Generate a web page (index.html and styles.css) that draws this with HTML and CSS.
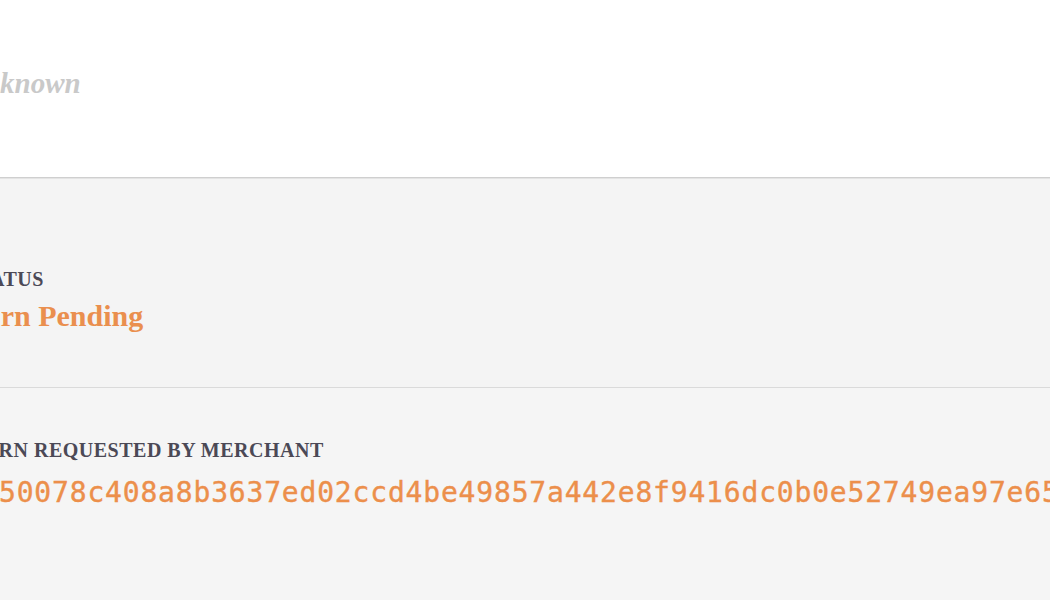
FILE: index.html
```html
<!DOCTYPE html>
<html lang="en">
<head>
<meta charset="utf-8">
<title>Return details</title>
<link rel="stylesheet" href="styles.css">
</head>
<body>
<main class="page">
  <section class="panel panel-top">
    <p class="muted-value">Unknown</p>
  </section>
  <section class="panel panel-status">
    <div class="field field-status">
      <h3 class="label">STATUS</h3>
      <p class="value value-status">Return Pending</p>
    </div>
  </section>
  <section class="panel panel-request">
    <div class="field field-request">
      <h3 class="label">RETURN REQUESTED BY MERCHANT</h3>
      <p class="value value-hash">50078c408a8b3637ed02ccd4be49857a442e8f9416dc0b0e52749ea97e65</p>
    </div>
  </section>
</main>
</body>
</html>
```

FILE: styles.css
```css
html, body {
  margin: 0;
  padding: 0;
  height: 100%;
  overflow: hidden;
  background: #f5f5f5;
}

.page {
  display: flex;
  flex-direction: column;
  height: 600px;
  font-family: "Liberation Serif", "Times New Roman", serif;
}

.panel {
  overflow: hidden;
}

.panel-top {
  background: #ffffff;
  height: 177px;
  padding-top: 69px;
  box-sizing: border-box;
}

.muted-value {
  margin: 0 0 0 -37px;
  font-size: 29px;
  line-height: 29px;
  font-weight: bold;
  font-style: italic;
  color: #c9c9c9;
  white-space: nowrap;
}

.panel-status {
  border-top: 1px solid #cfcfcf;
  box-shadow: inset 0 1px 0 #e4e4e4;
  background: #f4f4f4;
  height: 210px;
  padding-top: 91px;
  box-sizing: border-box;
}

.panel-request {
  border-top: 1px solid #dadada;
  background: #f5f5f5;
  flex: 1;
  padding-top: 52px;
}

.field {
  display: flex;
  flex-direction: column;
}

.label {
  margin: 0;
  font-size: 20px;
  line-height: 20px;
  font-weight: bold;
  letter-spacing: 0.5px;
  color: #4b4956;
  white-space: nowrap;
}

.field-status .label {
  margin-left: -34px;
}

.field-status .value {
  margin-left: -61px;
}

.field-request .label {
  margin-left: -59px;
}

.value {
  margin: 12px 0 0;
  font-size: 30px;
  line-height: 30px;
  font-weight: bold;
  color: #ea8f4e;
  white-space: nowrap;
}

.value-hash {
  margin: 19px 0 0 -1px;
  font-family: "DejaVu Sans Mono", "Liberation Mono", monospace;
  font-weight: normal;
  font-size: 28px;
  line-height: 28px;
  letter-spacing: 0.82px;
  color: #ec8f4b;
  -webkit-text-stroke: 0.4px #ec8f4b;
}
```
